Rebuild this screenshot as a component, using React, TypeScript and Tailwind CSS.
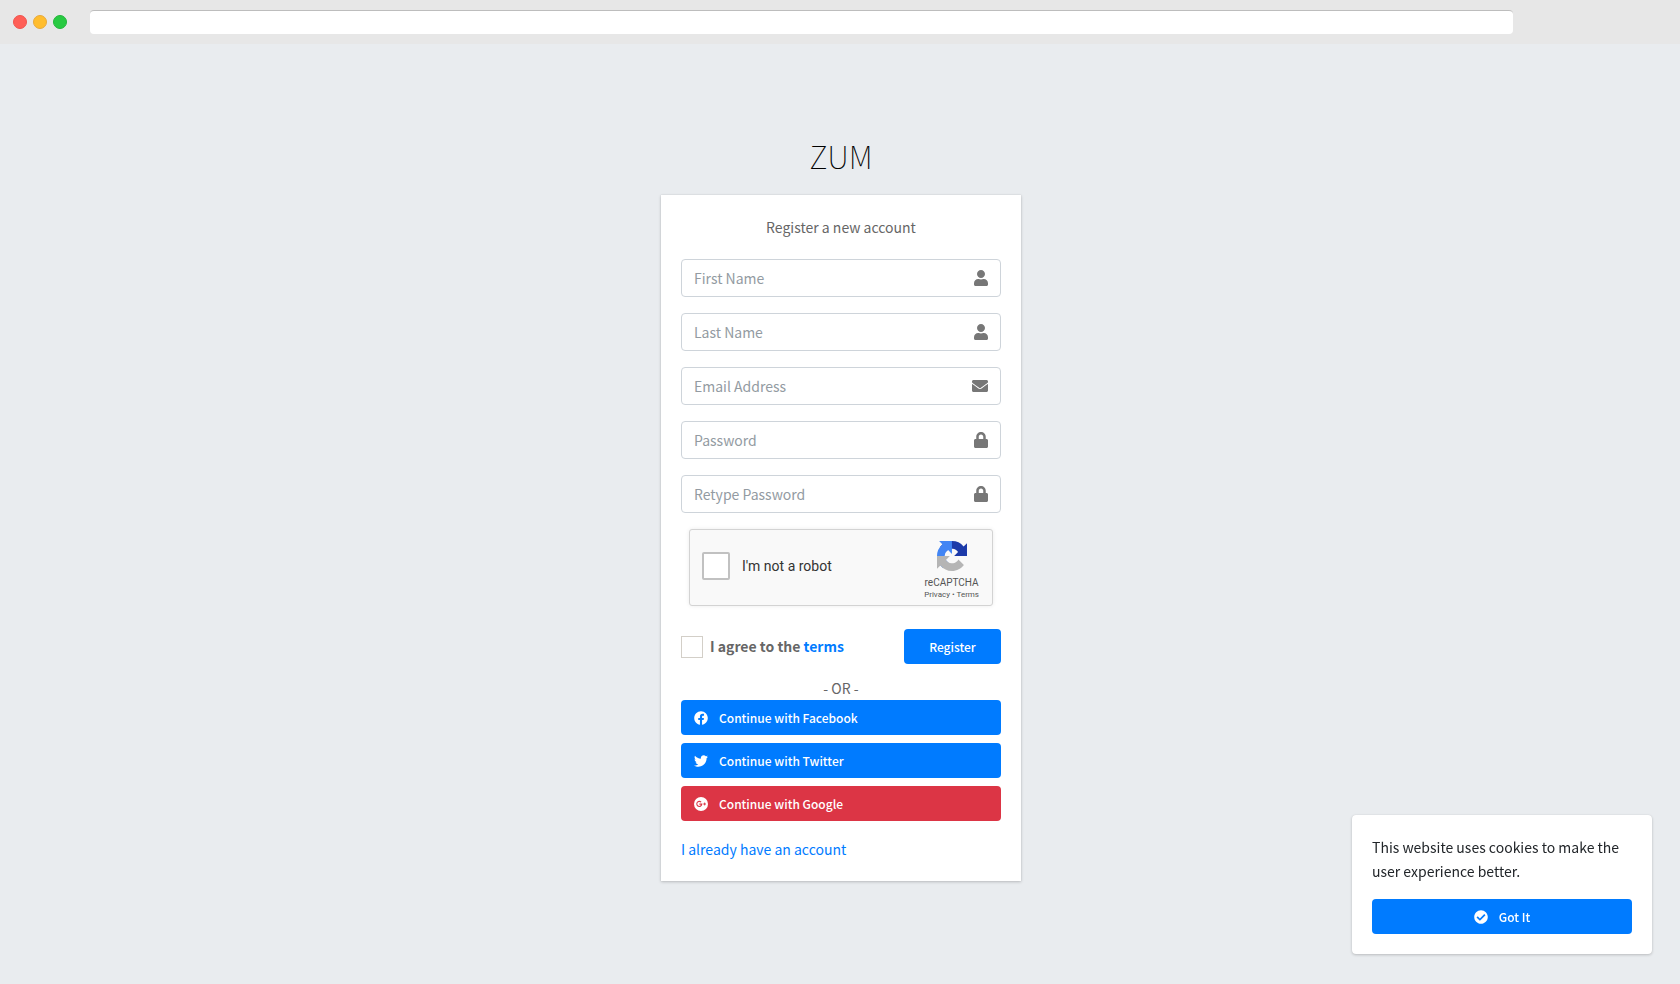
import type { ComponentType } from "react";
import {
  FaCheckCircle,
  FaEnvelope,
  FaFacebook,
  FaLock,
  FaTwitter,
  FaUser,
} from "react-icons/fa";

type IconType = ComponentType<{ className?: string }>;

const fields: {
  id: string;
  label: string;
  type: string;
  icon: IconType;
  iconWidth: string;
}[] = [
  { id: "first-name", label: "First Name", type: "text", icon: FaUser, iconWidth: "w-[14px]" },
  { id: "last-name", label: "Last Name", type: "text", icon: FaUser, iconWidth: "w-[14px]" },
  { id: "email", label: "Email Address", type: "email", icon: FaEnvelope, iconWidth: "w-4" },
  { id: "password", label: "Password", type: "password", icon: FaLock, iconWidth: "w-[14px]" },
  {
    id: "password-again",
    label: "Retype Password",
    type: "password",
    icon: FaLock,
    iconWidth: "w-[14px]",
  },
];

const providers: { text: string; icon: IconType; color: string }[] = [
  { text: "Continue with Facebook", icon: FaFacebook, color: "bg-[#007bff]" },
  { text: "Continue with Twitter", icon: FaTwitter, color: "bg-[#007bff]" },
  { text: "Continue with Google", icon: GooglePlusIcon, color: "bg-[#dc3545]" },
];

function GooglePlusIcon({ className }: { className?: string }) {
  return (
    <svg viewBox="0 0 24 24" className={className} aria-hidden="true">
      <circle cx="12" cy="12" r="12" fill="currentColor" />
      <path
        d="M12.2 8.8A4.3 4.3 0 1 0 13.4 12.2H9.2"
        fill="none"
        stroke="#dc3545"
        strokeWidth="1.8"
      />
      <path d="M18.2 9.6v4.8M15.8 12h4.8" stroke="#dc3545" strokeWidth="1.6" />
    </svg>
  );
}

function RecaptchaLogo() {
  return (
    <svg viewBox="0 0 64 64" className="size-[30px]" aria-hidden="true">
      <path
        d="M64 31.96c0-.46-.01-.92-.03-1.37V4.63l-7.18 7.18A31.92 31.92 0 0 0 32.06.1C21.66.1 12.42 5.1 6.58 12.86l11.76 11.89a15.6 15.6 0 0 1 4.77-5.35c2.05-1.6 4.96-2.91 8.95-2.91.48 0 .85.06 1.13.16 4.94.39 9.22 3.11 11.74 7.07l-8.33 8.33L64 31.96"
        fill="#1c3aa9"
      />
      <path
        d="M31.86.1c-.46 0-.92.01-1.37.03H4.53l7.18 7.18A31.92 31.92 0 0 0 0 32.04c0 10.4 5 19.64 12.76 25.48l11.89-11.76a15.6 15.6 0 0 1-5.35-4.77c-1.6-2.05-2.91-4.96-2.91-8.95 0-.48.06-.85.16-1.13.39-4.94 3.11-9.22 7.07-11.74l8.33 8.33L31.86.1"
        fill="#4285f4"
      />
      <path
        d="M0 32.04c0 .46.01.92.03 1.37v25.96l7.18-7.18A31.92 31.92 0 0 0 31.94 63.9c10.4 0 19.64-5 25.48-12.76L45.66 39.25a15.6 15.6 0 0 1-4.77 5.35c-2.05 1.6-4.96 2.91-8.95 2.91-.48 0-.85-.06-1.13-.16-4.94-.39-9.22-3.11-11.74-7.07l8.33-8.33L0 32.04"
        fill="#b5b5b5"
      />
    </svg>
  );
}

function BrowserBar() {
  return (
    <header className="flex h-11 items-center bg-[#e7e7e7] pl-[13px]">
      <div className="flex gap-[6px]">
        <span className="size-[14px] rounded-full border border-[#f0544d] bg-[#ff5f57]" />
        <span className="size-[14px] rounded-full border border-[#e8a93a] bg-[#ffbd2e]" />
        <span className="size-[14px] rounded-full border border-[#22b53a] bg-[#28ca42]" />
      </div>
      <input
        type="text"
        aria-label="Address"
        className="mr-[10%] ml-[23px] h-6 flex-1 rounded-[4px] border-t border-[#bdbdbd] bg-white px-2 text-xs outline-none"
      />
    </header>
  );
}

function Recaptcha() {
  return (
    <div className="mx-2 mt-4 flex h-[77px] items-start justify-between rounded-[3px] border border-[#d3d3d3] bg-[#f9f9f9] pr-[13px] pl-3 font-[Roboto,sans-serif] shadow-[0_0_4px_rgba(0,0,0,0.08)]">
      <label className="mt-[22px] flex items-center gap-3 text-sm text-[#333]">
        <input
          type="checkbox"
          className="size-7 appearance-none rounded-[2px] border-2 border-[#c1c1c1] bg-white"
        />
        I'm not a robot
      </label>
      <div className="mt-[11px] flex flex-col items-center text-[#555]">
        <RecaptchaLogo />
        <span className="mt-[6px] text-[10px] leading-3">reCAPTCHA</span>
        <span className="text-[8px] leading-3">
          <a href="#privacy">Privacy</a> • <a href="#terms">Terms</a>
        </span>
      </div>
    </div>
  );
}

function RegisterCard() {
  return (
    <main className="w-[360px] bg-white p-5 text-[#666] shadow-[0_0_1px_rgba(0,0,0,0.13),0_1px_3px_rgba(0,0,0,0.2)]">
      <p className="text-center leading-6">Register a new account</p>

      <form className="mt-5">
        <div className="flex flex-col gap-4">
          {fields.map(({ id, label, type, icon: Icon, iconWidth }) => (
            <div
              key={id}
              className="flex h-[38px] items-center rounded-[4px] border border-[#ced4da] pr-3"
            >
              <input
                id={id}
                type={type}
                placeholder={label}
                aria-label={label}
                className="h-full min-w-0 flex-1 px-3 outline-none placeholder:text-[#939ba2]"
              />
              <Icon className={`h-4 shrink-0 text-[#777] ${iconWidth}`} />
            </div>
          ))}
        </div>

        <Recaptcha />

        <div className="mt-[23px] flex items-center justify-between">
          <div className="flex items-center gap-[7px] font-bold">
            <input
              id="agree"
              type="checkbox"
              className="size-[22px] appearance-none border border-[#d3cfc8] bg-white"
            />
            <label htmlFor="agree">
              I agree to the{" "}
              <a href="#terms" className="text-[#007bff]">
                terms
              </a>
            </label>
          </div>
          <button
            type="submit"
            className="h-[35px] w-[97px] rounded-[4px] bg-[#007bff] text-[12px] font-medium text-white"
          >
            Register
          </button>
        </div>
      </form>

      <p className="mt-3 text-center leading-6">- OR -</p>

      <div className="flex flex-col gap-2">
        {providers.map(({ text, icon: Icon, color }) => (
          <button
            key={text}
            type="button"
            className={`flex h-[35px] items-center gap-[11px] rounded-[4px] px-[13px] text-[12px] font-medium text-white ${color}`}
          >
            <Icon className="size-[14px]" />
            {text}
          </button>
        ))}
      </div>

      <a href="#login" className="mt-4 block leading-6 text-[#007bff]">
        I already have an account
      </a>
    </main>
  );
}

function CookieNotice() {
  return (
    <aside className="fixed right-7 bottom-[30px] w-[300px] rounded-[4px] bg-white p-5 text-[#212529] shadow-[0_0_1px_rgba(0,0,0,0.13),0_1px_3px_rgba(0,0,0,0.2)]">
      <p className="leading-6">This website uses cookies to make the user experience better.</p>
      <button
        type="button"
        className="mt-4 flex h-[35px] w-full items-center justify-center gap-[11px] rounded-[4px] bg-[#007bff] text-[12px] font-medium text-white"
      >
        <FaCheckCircle className="size-[14px]" />
        Got It
      </button>
    </aside>
  );
}

export default function App() {
  return (
    <div className="min-h-screen bg-[#e9ecef] font-['Noto_Sans_CJK_SC','Open_Sans',sans-serif] text-[14px]">
      <BrowserBar />
      <div className="flex flex-col items-center pt-[85px] pl-0.5">
        <h1 className="mb-[13px] text-[31px] leading-[53px] font-thin text-black">ZUM</h1>
        <RegisterCard />
      </div>
      <CookieNotice />
    </div>
  );
}
